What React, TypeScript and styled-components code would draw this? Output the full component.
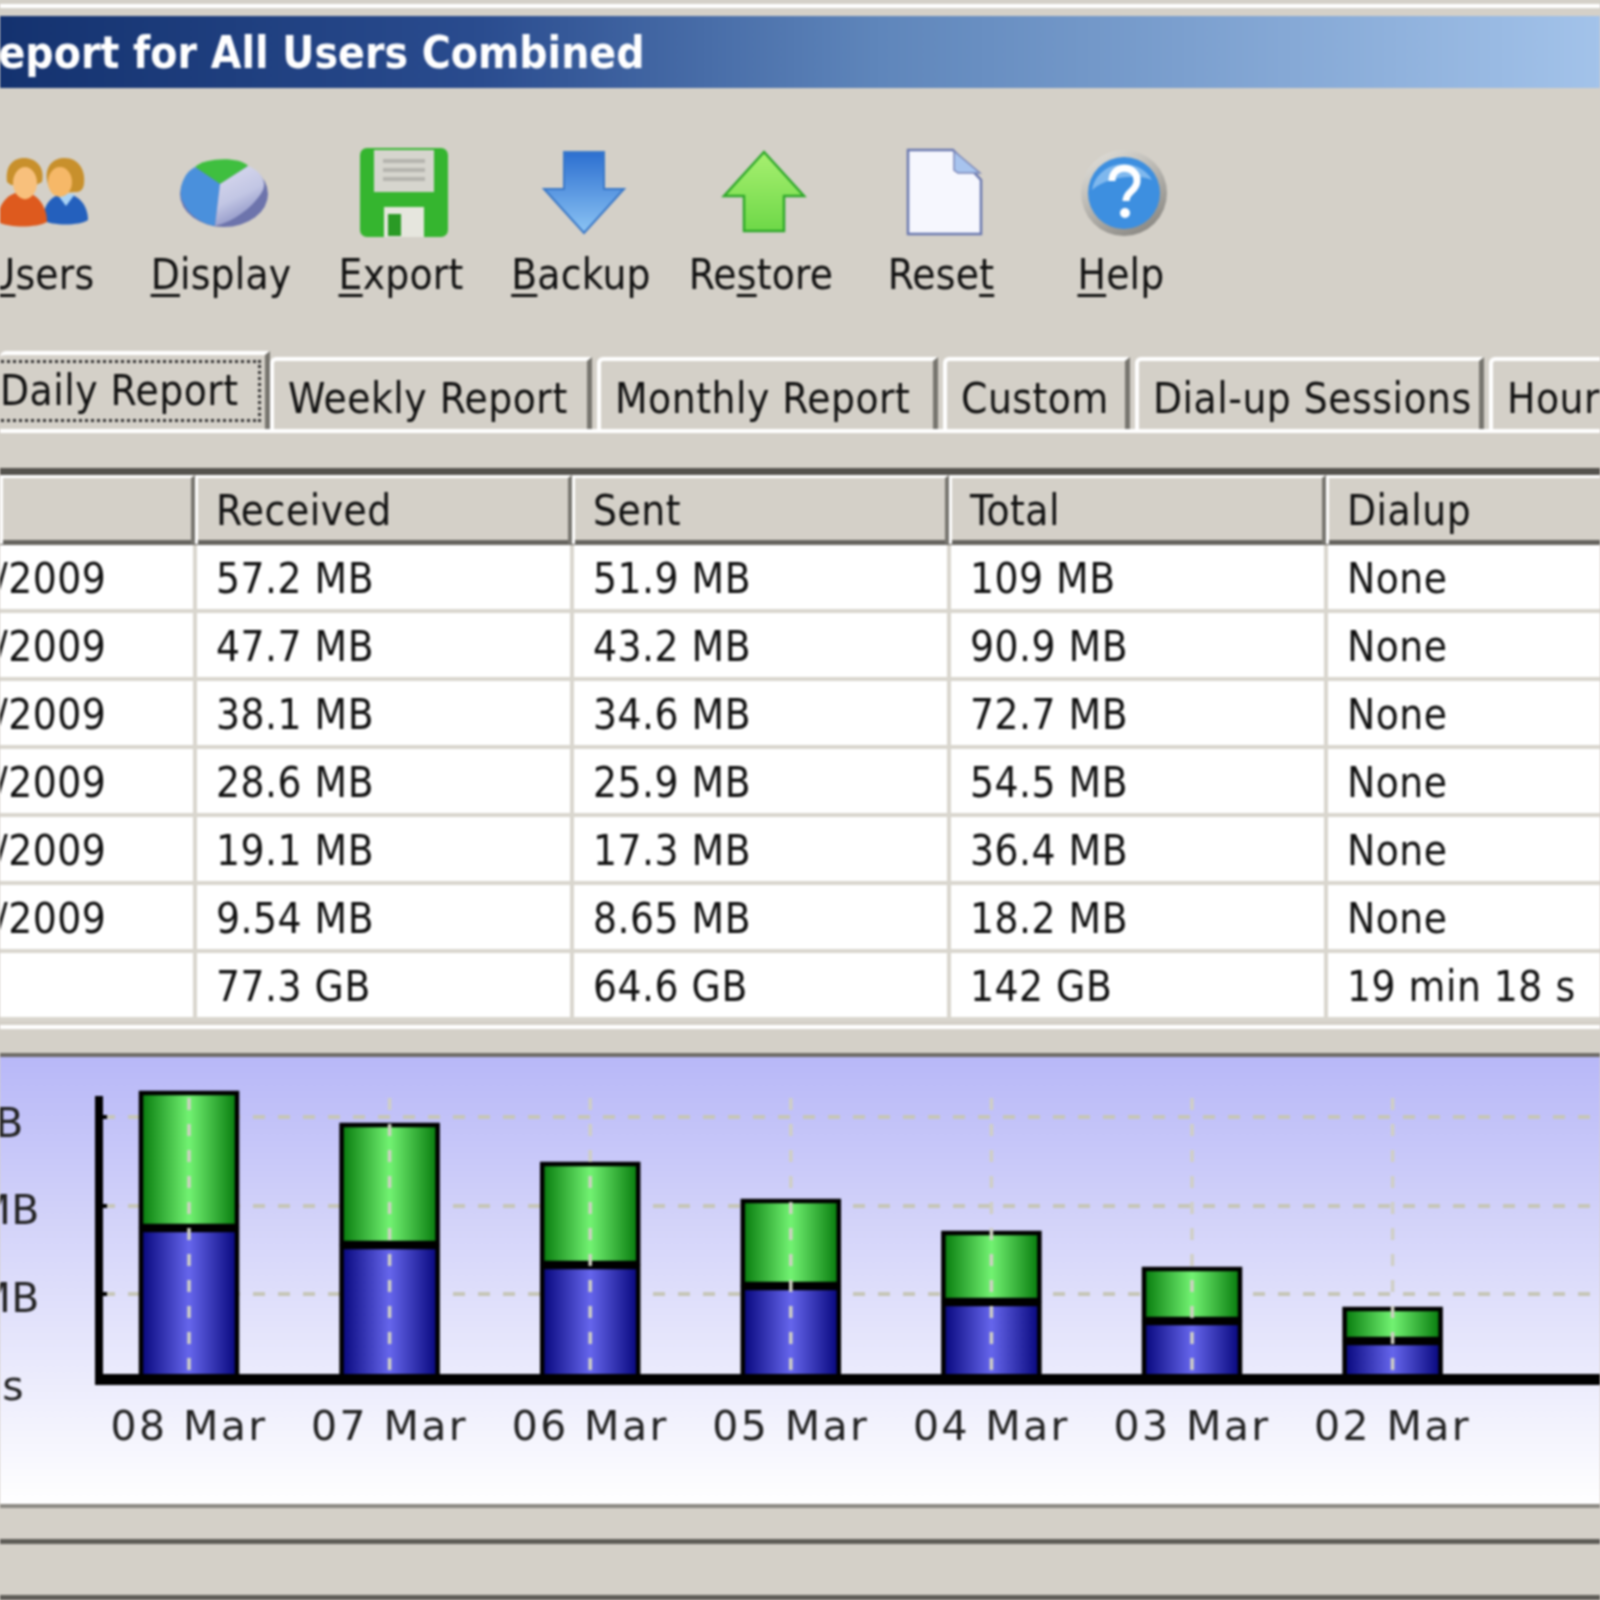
import React from "react";
import styled, { createGlobalStyle } from "styled-components";

const Global = createGlobalStyle`
  html, body { margin: 0; padding: 0; background: #d4d0c8; }
  #root { width: 1600px; height: 1600px; overflow: hidden; }
`;

const Win = styled.div`
  width: 1600px;
  height: 1600px;
  overflow: hidden;
  background: #d4d0c8;
  color: #111;
  font-family: "DejaVu Sans Condensed", "DejaVu Sans", sans-serif;
  font-size: 42px;
  letter-spacing: 0.5px;
  filter: blur(0.8px);
  display: flex;
  flex-direction: column;
`;

const TopEdge = styled.div`
  height: 4px;
  margin-top: 4px;
  margin-bottom: 8px;
  background: #fff;
  flex: none;
`;

const TitleBar = styled.div`
  height: 72px;
  flex: none;
  display: flex;
  align-items: center;
  background: linear-gradient(90deg, #14326f 0%, #2a4c8f 30%, #5f86bb 55%, #a3c3ea 100%);
  color: #fff;
  font-weight: bold;
  font-size: 44px;
  letter-spacing: 0;
  white-space: nowrap;
`;

const TitleText = styled.span`
  margin-left: -32px;
`;

const Toolbar = styled.div`
  flex: none;
  height: 277px;
  margin-left: -46px;
  padding-top: 60px;
  box-sizing: border-box;
  display: flex;
  letter-spacing: 0.2px;
`;

const ToolButton = styled.div`
  width: 180px;
  flex: none;
  display: flex;
  flex-direction: column;
  align-items: center;
  svg { display: block; }
`;

const ToolLabel = styled.span`
  margin-top: 12px;
  margin-right: 6px;
  line-height: 50px;
`;

const Key = styled.span`
  text-decoration: underline;
  text-decoration-thickness: 3px;
  text-underline-offset: 5px;
`;

const TabStrip = styled.div`
  flex: none;
  height: 74px;
  margin-top: -10px;
  display: flex;
  align-items: flex-end;
  white-space: nowrap;
`;

const Tab = styled.div<{ $w: number; $active?: boolean }>`
  flex: none;
  box-sizing: border-box;
  width: ${(p) => p.$w}px;
  height: ${(p) => (p.$active ? 78 : 72)}px;
  line-height: 76px;
  padding-left: ${(p) => (p.$active ? 0 : 14)}px;
  margin-right: ${(p) => (p.$active ? 0 : 5)}px;
  border-top: 4px solid #fff;
  border-left: ${(p) => (p.$active ? 0 : 4)}px solid #fff;
  border-right: 5px solid #77756f;
  border-top-left-radius: 6px;
`;

const FocusBox = styled.div`
  height: 62px;
  line-height: 56px;
  margin: 5px 4px 0 -10px;
  padding-left: 7px;
  border: 3px dotted #333;
  box-sizing: border-box;
`;

const Spacer = styled.div`
  flex: none;
  border-top: 4px solid #fff;
  height: 39px;
  box-sizing: border-box;
`;

const Table = styled.div`
  flex: none;
  border-top: 7px solid #55534e;
  background: #fff;
`;

const HeaderRow = styled.div`
  display: grid;
  grid-template-columns: 195px repeat(3, 377px) 1fr;
  height: 65px;
  background: #d4d0c8;
  border-bottom: 5px solid #66645f;
`;

const HeaderCell = styled.div`
  box-sizing: border-box;
  padding-left: 18px;
  line-height: 66px;
  border-top: 3px solid #fff;
  border-left: 3px solid #fff;
  border-right: 4px solid #77756f;
  &:last-child { border-right: 0; }
`;

const Row = styled.div`
  display: grid;
  grid-template-columns: 197px repeat(3, 377px) 1fr;
  height: 68px;
  box-sizing: border-box;
  border-bottom: 4px solid #d9d6ce;
`;

const Cell = styled.div`
  box-sizing: border-box;
  padding-left: 19px;
  line-height: 68px;
  white-space: nowrap;
  border-right: 4px solid #d9d6ce;
  &:last-child { border-right: 0; }
`;

const DateCell = styled(Cell)`
  padding-left: 0;
  text-indent: -5px;
`;

const Gap = styled.div`
  flex: none;
  height: 28px;
  border-top: 4px solid #fff;
  margin-top: 4px;
  box-sizing: border-box;
`;

const ChartPanel = styled.div`
  flex: none;
  border-top: 4px solid #6e6c67;
  background: linear-gradient(180deg, #b8b8f8 0%, #d9d9fa 45%, #ffffff 100%);
  svg { display: block; }
`;

const StatusBar = styled.div`
  flex: none;
  height: 35px;
  border-top: 4px solid #8b8983;
  box-sizing: border-box;
`;

const BottomBar = styled.div`
  flex: none;
  height: 61px;
  border-top: 5px solid #5e5c57;
  border-bottom: 5px solid #5e5c57;
  box-sizing: border-box;
`;

const rows = [
  ["/2009", "57.2 MB", "51.9 MB", "109 MB", "None"],
  ["/2009", "47.7 MB", "43.2 MB", "90.9 MB", "None"],
  ["/2009", "38.1 MB", "34.6 MB", "72.7 MB", "None"],
  ["/2009", "28.6 MB", "25.9 MB", "54.5 MB", "None"],
  ["/2009", "19.1 MB", "17.3 MB", "36.4 MB", "None"],
  ["/2009", "9.54 MB", "8.65 MB", "18.2 MB", "None"],
  ["", "77.3 GB", "64.6 GB", "142 GB", "19 min 18 s"],
];

const bars = [
  { top: 1092, mid: 1225, label: "08 Mar" },
  { top: 1124, mid: 1242, label: "07 Mar" },
  { top: 1163, mid: 1262, label: "06 Mar" },
  { top: 1200, mid: 1283, label: "05 Mar" },
  { top: 1232, mid: 1299, label: "04 Mar" },
  { top: 1268, mid: 1318, label: "03 Mar" },
  { top: 1308, mid: 1338, label: "02 Mar" },
];

function UsersIcon() {
  return (
    <svg width="90" height="90" viewBox="0 0 90 90">
      <path d="M44 72c0-14 8-26 22-26s23 12 23 26c-8 6-37 6-45 0z" fill="#2460bd" />
      <path d="M58 46l9 12 9-12z" fill="#a9d3f5" />
      <path d="M48 32c-2-14 6-22 18-22 13 0 21 12 19 26-1 7-5 8-8 8l-20 1c-5-2-8-6-9-13z" fill="#c8902c" />
      <ellipse cx="61" cy="34" rx="12" ry="15" fill="#f6b868" />
      <path d="M-1 74c-1-16 9-30 24-30s25 14 25 30c-10 6-39 6-49 0z" fill="#de5a1e" />
      <path d="M18 44l8 8 8-8z" fill="#f0883a" />
      <path d="M8 34C6 19 13 10 25 10c12 0 21 9 18 24l-6 3H12z" fill="#c8902c" />
      <ellipse cx="26" cy="35" rx="12" ry="16" fill="#f8c07c" />
    </svg>
  );
}

function PieIcon() {
  return (
    <svg width="90" height="90" viewBox="0 0 90 90">
      <defs>
        <linearGradient id="pieLight" x1="0" y1="0" x2="0.4" y2="1">
          <stop offset="0" stopColor="#dcdcf0" />
          <stop offset="0.6" stopColor="#c2c6e4" />
          <stop offset="1" stopColor="#8c92c4" />
        </linearGradient>
      </defs>
      <ellipse cx="45" cy="46" rx="44" ry="33" fill="#6d74ac" />
      <path d="M41 36L16 19C25 10 60 8 69 18z" fill="#3fbf3f" />
      <path d="M41 36L16 19C2 26-1 46 4 54c6 14 20 22 32 24z" fill="#4a90dc" />
      <path d="M41 36L69 18c11 4 19 14 15 24-6 12-24 30-48 36z" fill="url(#pieLight)" />
    </svg>
  );
}

function FloppyIcon() {
  return (
    <svg width="90" height="90" viewBox="0 0 90 90">
      <rect x="1" y="0" width="88" height="89" rx="7" fill="#35b52f" />
      <rect x="15" y="2" width="60" height="42" fill="#d6d5ce" />
      <path d="M24 13h42M24 22h42M24 31h42" stroke="#b5b4ae" strokeWidth="4" />
      <rect x="25" y="59" width="40" height="30" fill="#e6e6de" />
      <rect x="29" y="66" width="13" height="22" fill="#2a9a25" />
    </svg>
  );
}

function ArrowDownIcon() {
  return (
    <svg width="90" height="90" viewBox="0 0 90 90">
      <defs>
        <linearGradient id="bl" x1="0" y1="0" x2="0" y2="1">
          <stop offset="0" stopColor="#2c6fd0" />
          <stop offset="1" stopColor="#8cc4f4" />
        </linearGradient>
      </defs>
      <path d="M25 4h40v37h20L45 85 5 41h20z" fill="url(#bl)" stroke="#3a78c8" strokeWidth="2" />
    </svg>
  );
}

function ArrowUpIcon() {
  return (
    <svg width="90" height="90" viewBox="0 0 90 90">
      <defs>
        <linearGradient id="gr" x1="0" y1="0" x2="0" y2="1">
          <stop offset="0" stopColor="#a8f070" />
          <stop offset="1" stopColor="#6ed848" />
        </linearGradient>
      </defs>
      <path d="M45 4l40 44H65v35H25V48H5z" fill="url(#gr)" stroke="#2fa82a" strokeWidth="2.5" />
    </svg>
  );
}

function PageIcon() {
  return (
    <svg width="90" height="90" viewBox="0 0 90 90">
      <path d="M9 2h45l28 30v54H9z" fill="#f6f7fe" stroke="#6a78b0" strokeWidth="2.5" />
      <path d="M55 3v19l4 3h22z" fill="#a8c4ee" stroke="#7a86b8" strokeWidth="1.5" />
    </svg>
  );
}

function HelpIcon() {
  return (
    <svg width="90" height="90" viewBox="0 0 90 90">
      <defs>
        <linearGradient id="ring" x1="0" y1="0" x2="0.6" y2="1">
          <stop offset="0" stopColor="#e8e6e0" />
          <stop offset="1" stopColor="#8f8d88" />
        </linearGradient>
      </defs>
      <circle cx="45" cy="45" r="43" fill="url(#ring)" />
      <circle cx="45" cy="45" r="36" fill="#3d8fe0" />
      <path d="M13 42a32 30 0 0 1 60-10c-14-6-44-4-60 10z" fill="#7fb8ee" />
      <path d="M33 33c0-18 26-16 25 0 0 10-11 10-11 20" fill="none" stroke="#fff" strokeWidth="7" />
      <circle cx="46" cy="65" r="5" fill="#fff" />
    </svg>
  );
}

function Chart() {
  const gridYs = [1116, 1205, 1293];
  return (
    <svg width="1600" height="447" viewBox="0 1056 1600 447">
      <defs>
        <linearGradient id="barGreen" x1="0" y1="0" x2="1" y2="0">
          <stop offset="0" stopColor="#067a0c" />
          <stop offset="0.5" stopColor="#72f272" />
          <stop offset="1" stopColor="#067a0c" />
        </linearGradient>
        <linearGradient id="barBlue" x1="0" y1="0" x2="1" y2="0">
          <stop offset="0" stopColor="#06067c" />
          <stop offset="0.5" stopColor="#6666ec" />
          <stop offset="1" stopColor="#06067c" />
        </linearGradient>
      </defs>
      {gridYs.map((y) => (
        <line key={y} x1="103" x2="1600" y1={y} y2={y} stroke="#c6c6b8" strokeWidth="4" strokeDasharray="12 13" />
      ))}
      {bars.map((b, i) => {
        const x = 141 + i * 200.6;
        return (
          <g key={b.label}>
            <rect x={x} y={b.top} width={96} height={b.mid - b.top} fill="url(#barGreen)" stroke="#000" strokeWidth="4.5" />
            <rect x={x} y={b.mid + 4} width={96} height={1376 - b.mid} fill="url(#barBlue)" stroke="#000" strokeWidth="4.5" />
            <line x1={x + 48} x2={x + 48} y1="1097" y2="1372" stroke="#cfcfc4" strokeWidth="3.5" strokeDasharray="12 14" />
            <text x={x + 48} y="1439" textAnchor="middle" fontFamily="DejaVu Sans" fontSize="41" letterSpacing="2.4" fill="#222">
              {b.label}
            </text>
          </g>
        );
      })}
      <rect x="95" y="1095" width="8" height="289" fill="#000" />
      <rect x="95" y="1373" width="1505" height="11" fill="#000" />
      {gridYs.map((y) => (
        <rect key={y} x="103" y={y - 2} width="4" height="4" fill="#000" />
      ))}
      <text x="24" y="1136" textAnchor="end" fontFamily="DejaVu Sans" fontSize="41" fill="#222">B</text>
      <text x="40" y="1223" textAnchor="end" fontFamily="DejaVu Sans" fontSize="41" fill="#222">MB</text>
      <text x="40" y="1311" textAnchor="end" fontFamily="DejaVu Sans" fontSize="41" fill="#222">MB</text>
      <text x="24" y="1399" textAnchor="end" fontFamily="DejaVu Sans" fontSize="41" fill="#222">s</text>
    </svg>
  );
}

export default function App() {
  return (
    <Win>
      <Global />
      <TopEdge />
      <TitleBar>
        <TitleText>Report for All Users Combined</TitleText>
      </TitleBar>
      <Toolbar>
        <ToolButton><UsersIcon /><ToolLabel><Key>U</Key>sers</ToolLabel></ToolButton>
        <ToolButton><PieIcon /><ToolLabel><Key>D</Key>isplay</ToolLabel></ToolButton>
        <ToolButton><FloppyIcon /><ToolLabel><Key>E</Key>xport</ToolLabel></ToolButton>
        <ToolButton><ArrowDownIcon /><ToolLabel><Key>B</Key>ackup</ToolLabel></ToolButton>
        <ToolButton><ArrowUpIcon /><ToolLabel>Re<Key>s</Key>tore</ToolLabel></ToolButton>
        <ToolButton><PageIcon /><ToolLabel>Rese<Key>t</Key></ToolLabel></ToolButton>
        <ToolButton><HelpIcon /><ToolLabel><Key>H</Key>elp</ToolLabel></ToolButton>
      </Toolbar>
      <TabStrip>
        <Tab $w={270} $active><FocusBox>Daily Report</FocusBox></Tab>
        <Tab $w={322}>Weekly Report</Tab>
        <Tab $w={341}>Monthly Report</Tab>
        <Tab $w={187}>Custom</Tab>
        <Tab $w={349}>Dial-up Sessions</Tab>
        <Tab $w={200}>Hourly</Tab>
      </TabStrip>
      <Spacer />
      <Table>
        <HeaderRow>
          <HeaderCell />
          <HeaderCell>Received</HeaderCell>
          <HeaderCell>Sent</HeaderCell>
          <HeaderCell>Total</HeaderCell>
          <HeaderCell>Dialup</HeaderCell>
        </HeaderRow>
        {rows.map((r, i) => (
          <Row key={i}>
            <DateCell>{r[0]}</DateCell>
            <Cell>{r[1]}</Cell>
            <Cell>{r[2]}</Cell>
            <Cell>{r[3]}</Cell>
            <Cell>{r[4]}</Cell>
          </Row>
        ))}
      </Table>
      <Gap />
      <ChartPanel>
        <Chart />
      </ChartPanel>
      <StatusBar />
      <BottomBar />
    </Win>
  );
}
